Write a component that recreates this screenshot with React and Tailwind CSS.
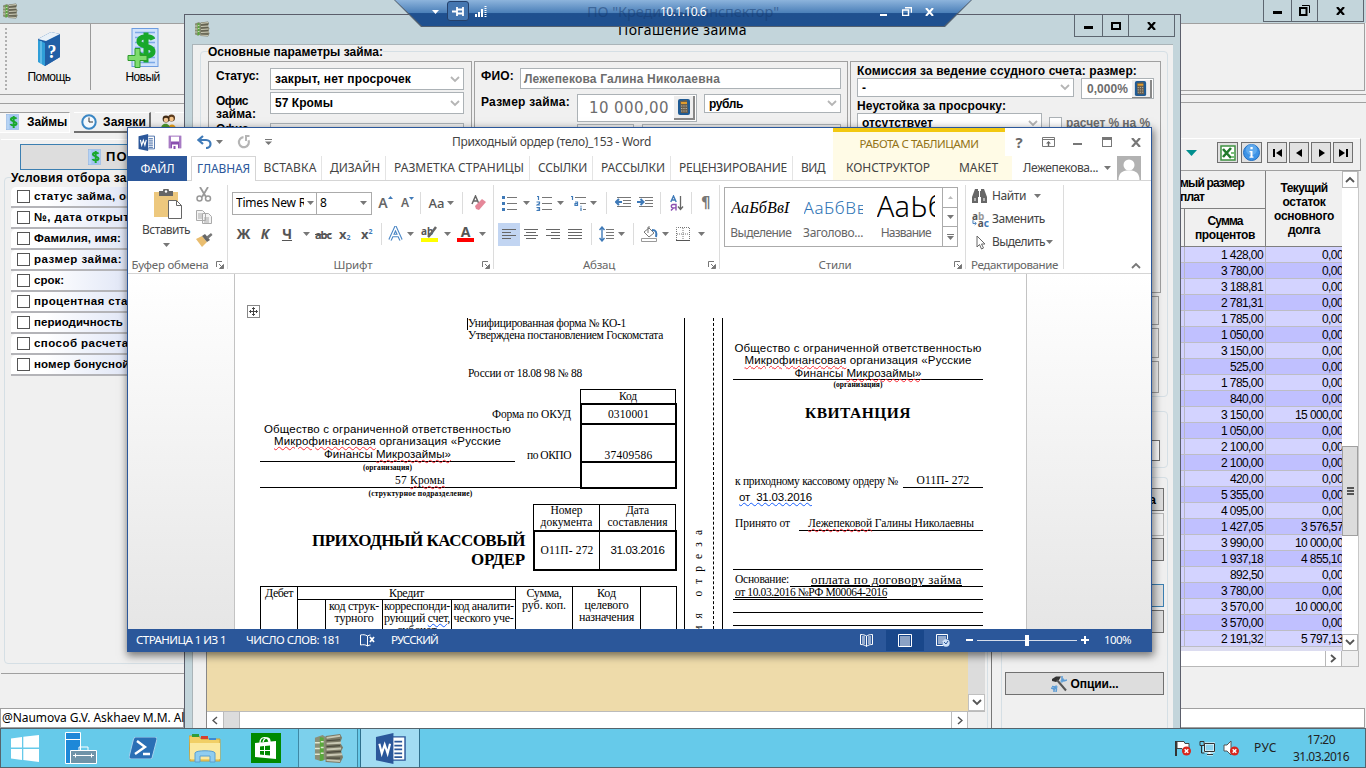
import React, { useLayoutEffect, useRef, useState } from "react";

/* Text run whose tracking is adjusted so that it occupies a fixed width. */
function T({ w, c = "", children }) {
  const ref = useRef(null);
  const [ls, setLs] = useState(0);
  useLayoutEffect(() => {
    const el = ref.current;
    const prev = el.style.letterSpacing;
    el.style.letterSpacing = "0px";
    const natural = el.getBoundingClientRect().width;
    el.style.letterSpacing = prev;
    setLs((w - natural) / el.textContent.length);
  }, [w]);
  return (
    <span ref={ref} className={"inline-block w-max shrink-0 whitespace-pre leading-none " + c} style={{ letterSpacing: w ? ls + "px" : undefined }}>
      {children}
    </span>
  );
}

const Tri = ({ c = "text-[#777]" }) => (
  <svg width="7" height="4" viewBox="0 0 7 4" className={"shrink-0 " + c}><path d="M0 0h7L3.500 4z" fill="currentColor" /></svg>
);
const Chev = ({ d = "M1 1l4 4 4-4", c = "text-[#b5b5b5]" }) => (
  <svg width="10" height="7" viewBox="0 0 10 7" className={"shrink-0 " + c}><path d={d} fill="none" stroke="currentColor" strokeWidth="1.800" /></svg>
);
const Vsep = ({ c = "" }) => <div className={"h-[22px] w-px shrink-0 bg-[#dcdcdc] " + c} />;

/* ---------- icons ---------- */
const Money = ({ s = 16 }) => (
  <svg width={s} height={s} viewBox="0 0 32 32">
    <path d="M2 5l8-3 4 3v22l-6 2-6-2z" fill="#8a8f78" /><path d="M7 4l4 1v23l-4 1z" fill="#5aa83c" />
    <path d="M13 3l15-2 2 4-2 5 3 5-2 4 2 6-3 6-15-1z" fill="#7b7a66" />
    <path d="M14 5l14-2M14 11l15-1M14 17l15-1M14 23l16-1M14 28l14 1" stroke="#c9c8b4" strokeWidth="2" />
    <path d="M14 8l14-1M14 14l14-1M14 20l15-1M14 26l14 0" stroke="#4b4a3d" strokeWidth="1.2" /><path d="M2 10h5M2 16h5M2 22h5M8 9h3M8 15h3M8 21h3" stroke="#dfe6cf" strokeWidth="1.5" />
  </svg>
);
const Sheet = ({ w = 14, h = 16, plus }) => (
  <svg width={w} height={h} viewBox="0 0 32 40">
    {plus ? <rect x="5" y="1" width="26" height="38" fill="#cfe2fb" stroke="#6d9ce0" /> : <rect x="0.5" y="0.5" width="31" height="39" fill="#b5d3f5" stroke="#7fa8dd" />}
    <path d="M8 5h20M8 10h20M8 15h20M8 20h20M8 25h20M8 30h20M8 35h20" stroke="#7ba9e6" strokeWidth="1.6" />
    <path d="M26 12c-2-4-14-4-14 2 0 5 14 4 14 10 0 6-13 6-15 1M19 5v30" fill="none" stroke="#19a82c" strokeWidth="5" />
    {plus && <path d="M8 21h5v7h7v5h-7v7H8v-7H1v-5h7z" fill="#7fdc6e" stroke="#2c9a2a" />}
  </svg>
);
const Book = () => (
  <svg width="24" height="36" viewBox="0 0 24 36">
    <path d="M1 8L14 1l9 2v23L8 35l-7-5z" fill="#1d5fa8" /><path d="M1 8L14 1l9 2-14 7z" fill="#e9f1f8" />
    <path d="M1 9l7 3v23l-7-4z" fill="#2f9ed8" /><path d="M8 12l15-8v22L8 35z" fill="#215fa6" /><path d="M4 10v23" stroke="#8fd6f4" />
    <text x="10.5" y="27" fontSize="18" fontWeight="bold" fill="#fff" fontFamily="Liberation Serif, serif">?</text>
  </svg>
);
const WordIcon = ({ w = 17, h = 17 }) => (
  <svg width={w} height={h} viewBox="0 0 32 32">
    <path d="M17 4h14v24H17z" fill="#fff" stroke="#2b579a" strokeWidth="1.5" /><path d="M20 9h8M20 13h8M20 17h8M20 21h8M20 25h8" stroke="#2b579a" strokeWidth="1.8" />
    <path d="M1 4l18-4v32L1 28z" fill="#2b579a" /><path d="M4.5 11l2.5 10 3-9 3 9 2.5-10" fill="none" stroke="#fff" strokeWidth="2.2" />
  </svg>
);
const Calc = ({ w = 12, h = 16 }) => (
  <svg width={w} height={h} viewBox="0 0 12 16"><rect width="12" height="16" rx="2" fill="#1f5b94" /><path d="M2 2l7-1 1 13H3z" fill="#6b5f4c" /><path d="M3 3h6v2H3z" fill="#e09c2c" /><path d="M3 7h6M3 9.5h6M3 12h6" stroke="#b9b2a0" strokeDasharray="1.3 1" /></svg>
);
const Clock = () => (
  <svg width="16" height="16" viewBox="0 0 16 16"><circle cx="8" cy="8" r="6.7" fill="#f4f9fd" stroke="#3a86c4" strokeWidth="2" /><path d="M8 3.5V8h4" fill="none" stroke="#333" /></svg>
);
const People = () => (
  <svg width="15" height="15" viewBox="0 0 15 15"><circle cx="10.5" cy="4" r="3.5" fill="#5a3a1c" /><circle cx="10.5" cy="5" r="2.3" fill="#f5c58a" /><path d="M7 15c0-6 8-6 8 0z" fill="#e9a11d" /><circle cx="5" cy="5" r="3.4" fill="#402a15" /><circle cx="5" cy="6" r="2.3" fill="#f3c795" /><path d="M0 15c0-7 9-7 9 0z" fill="#4f9a2d" /></svg>
);
const Lines = ({ w = 15, rows }) => (
  <svg width={w} height="12" viewBox="0 0 15 12" className="shrink-0"><path d={rows} stroke="#666" strokeWidth="1" fill="none" /></svg>
);
const Launcher = () => (
  <svg width="8" height="8" viewBox="0 0 8 8" className="shrink-0"><path d="M.5 6V.5H6" fill="none" stroke="#777" /><path d="M3 3l3 3M7.5 3.5v4h-4z" stroke="#777" fill="#777" /></svg>
);

/* ---------- application main window ---------- */
const app = "font-['Liberation_Sans',sans-serif]";
const SEARCH = [["статус займа, офис", 117], ["№, дата открытия", 110], ["Фамилия, имя:", 87], ["размер займа:", 88], ["срок:", 30], ["процентная ставка", 114], ["периодичность", 89], ["способ расчета %", 109], ["номер бонусной карты", 134]];
const ROWS = [["1 428,00", "0,00"], ["3 780,00", "0,00"], ["3 188,81", "0,00"], ["2 781,31", "0,00"], ["1 785,00", "0,00"], ["1 050,00", "0,00"], ["3 150,00", "0,00"], ["525,00", "0,00"], ["1 785,00", "0,00"], ["840,00", "0,00"], ["3 150,00", "15 000,00"], ["1 050,00", "0,00"], ["2 100,00", "0,00"], ["2 100,00", "0,00"], ["420,00", "0,00"], ["5 355,00", "0,00"], ["4 095,00", "0,00"], ["1 427,05", "3 576,57"], ["3 990,00", "10 000,00"], ["1 937,18", "4 855,10"], ["892,50", "0,00"], ["3 780,00", "0,00"], ["3 570,00", "10 000,00"], ["3 570,00", "0,00"], ["2 191,32", "5 797,13"]];
const numWidth = (s) => ({ 4: 21, 6: 33, 8: 42, 9: 48 })[s.length];

const WinButtons = ({ restore }) => (
  <div className="flex h-[22px] w-[101px] border border-t-0 border-[#5d6670] text-black">
    <div className="flex w-[28px] items-center justify-center border-r border-[#5d6670]"><div className="mt-[4px] h-[3px] w-[9px] bg-black" /></div>
    <div className="flex w-[26px] items-center justify-center border-r border-[#5d6670]">
      {restore ? <svg width="11" height="11" viewBox="0 0 11 11"><path d="M3 .5h7.5V8" fill="none" stroke="#000" /><rect x="1" y="3" width="6.5" height="7" fill="none" stroke="#000" strokeWidth="2" /></svg>
        : <svg width="10" height="8" viewBox="0 0 10 8"><rect x="1" y="1" width="8" height="6" fill="none" stroke="#000" strokeWidth="2" /></svg>}
    </div>
    <div className="flex flex-1 items-center justify-center"><svg width="9" height="8" viewBox="0 0 9 8"><path d="M1 0l7 8M8 0L1 8" stroke="#000" strokeWidth="2.2" /></svg></div>
  </div>
);
const NavBtn = ({ d }) => (
  <div className="flex h-[21px] w-[20px] items-center justify-center border border-[#707070] bg-[#e1e1e1]"><svg width="11" height="8" viewBox="0 0 11 8"><path d={d} fill="#000" /></svg></div>
);

function MainLeft() {
  return (
    <div className="flex w-[184px] flex-col overflow-hidden">
      <div className="flex h-[72px] border-b border-t border-[#a0a0a0] pl-[5px]">
        <div className="mt-[4px] h-[62px] w-[3px] shrink-0 border-l-2 border-dotted border-[#b0b0b0]" />
        <div className="mb-[4px] flex w-[83px] shrink-0 flex-col items-center border-r border-[#9a9a9a] pt-[7px]"><Book /><T w={43} c="mt-[4px] text-[12px]">Помощь</T></div>
        <div className="flex w-[103px] shrink-0 flex-col items-center pt-[3px]"><Sheet w={32} h={41} plus /><T w={34} c="mt-[3px] text-[12px]">Новый</T></div>
      </div>
      <div className="h-[9px] border-b border-[#a0a0a0]" />
      <div className="mt-[8px] flex h-[21px] w-[250px] shrink-0 text-[12px] font-bold">
        <div className="flex w-[70px] items-center border border-l-0 border-[#a0a0a0] border-b-white border-r-white bg-[#f7f7f7] pl-[6px]"><Sheet w={13} h={16} /><T w={40} c="ml-[8px]">Займы</T></div>
        <div className="ml-[4px] flex w-[77px] items-center border-b-2 border-r-2 border-t border-[#707070] border-t-white pl-[7px]"><Clock /><T w={43} c="ml-[6px]">Заявки</T></div>
        <div className="ml-[4px] flex w-[90px] items-center border-b-2 border-t border-[#707070] border-t-white pl-[6px]"><People /><T w={52} c="ml-[8px]">Клиенты</T></div>
      </div>
      <div className="ml-px mt-[6px] flex h-[536px] w-[240px] flex-col border-b border-t border-[#a0a0a0] border-t-white">
        <div className="ml-[19px] mt-[4px] flex h-[26px] shrink-0 items-center border border-[#3c7fb1] bg-[#dddddd] pl-[67px]"><Sheet w={13} h={16} /><T w={52} c="ml-[5px] text-[13px] font-bold">ПОИСК</T></div>
        <div className="ml-[3px] mt-[7px] flex h-[487px] flex-col rounded-l border border-[#d5dfe5] bg-[#f0f0f0]">
          <T w={152} c="-mt-[6px] ml-[6px] h-[15px] self-start bg-[#f0f0f0] text-[12px] font-bold">Условия отбора займов:</T>
          {SEARCH.map(([s, w]) => (
            <div key={s} className="ml-[6px] flex h-[21px] shrink-0 items-center rounded-tl-[5px] border-b-2 border-[#b4b4b8] bg-linear-to-r from-white from-15% to-[#d9e0f4] to-60% pl-[6px]">
              <div className="size-[13px] border border-[#555] bg-white" /><T w={w} c="ml-[4px] text-[11.5px] font-bold">{s}</T>
            </div>
          ))}
        </div>
      </div>
      <div className="mt-[34px] flex h-[20px] shrink-0 items-center border border-[#a0a0a0] bg-white pl-px"><T w={221} c="font-['Noto_Sans',sans-serif] text-[12px]">@Naumova G.V. Askhaev M.M. All rights</T></div>
    </div>
  );
}

function MainRight() {
  return (
    <div className="ml-[996px] flex w-[186px] flex-col">
      <div className="h-[68px] w-[185px] border-b border-r border-t border-[#a0a0a0]" />
      <div className="h-[4px] border-b border-[#a0a0a0]" /><div className="h-[9px] border-b border-[#a0a0a0]" />
      <div className="mt-[35px] flex h-[33px] w-[181px] items-center border-b border-r border-[#a0a0a0] border-t border-t-white pb-[4px] pl-[6px]">
        <svg width="11" height="6" viewBox="0 0 11 6"><path d="M0 0h11L5.500 6z" fill="#008f8f" /></svg>
        <div className="ml-[20px] flex size-[21px] items-center justify-center border border-[#707070] bg-[#e1e1e1]"><svg width="16" height="16" viewBox="0 0 16 16"><rect x="1" y="1" width="14" height="14" fill="#fff" stroke="#3e9140" strokeWidth="1.5" /><path d="M3 4l8 9M11 3l-8 9" stroke="#217b2c" strokeWidth="2.6" /><path d="M11 7h3v2h-3zM11 11h3v2h-3z" fill="#7cc07c" /></svg></div>
        <div className="ml-[3px] flex size-[21px] items-center justify-center border border-[#707070] bg-[#e1e1e1]"><svg width="17" height="17" viewBox="0 0 17 17"><circle cx="8.500" cy="8.500" r="8" fill="#3d93e6" stroke="#1f6dc0" /><circle cx="8.500" cy="5.500" r="5.500" fill="#77b9f3" opacity=".6" /><path d="M7.400 3h2.300v2.300H7.400zM6.500 7h3v5.500h1v1.300h-4v-1.300h1V8.300h-1z" fill="#fff" /></svg></div>
        <div className="ml-[5px] flex gap-[2px]">
          <NavBtn d="M1 0h2v8H1zM10 0v8L4 4z" /><NavBtn d="M8 0v8L2 4z" /><NavBtn d="M3 0v8l6-4z" /><NavBtn d="M8 0h2v8H8zM1 0v8l6-4z" />
        </div>
      </div>
      <div className="flex h-[480px] w-[179px] border-r border-[#c8c8c8]">
        <div className="flex w-[162px] flex-col overflow-hidden text-[12px]">
          <div className="flex h-[76px] shrink-0 border-b border-[#808080] text-center font-bold">
            <div className="flex w-[86px] flex-col border-r border-[#808080]">
              <div className="flex h-[38px] flex-col gap-[2px] border-b border-[#808080] pt-[6px] text-left"><T w={64}>мый размер</T><T w={24}>плат</T></div>
              <div className="flex flex-1"><div className="w-[5px] border-r border-[#808080]" /><div className="flex flex-1 flex-col items-center gap-[2px] pt-[6px]"><T w={35}>Сумма</T><T w={60}>процентов</T></div></div>
            </div>
            <div className="flex flex-1 flex-col items-center gap-[2px] pt-[11px]"><T w={47}>Текущий</T><T w={43}>остаток</T><T w={60}>основного</T><T w={32}>долга</T></div>
          </div>
          {ROWS.map(([a, b], i) => (
            <div key={i} className={"flex h-[16px] shrink-0 items-center border-b border-[#bdbdc4] " + (i % 2 ? "bg-[#c0c0ff]" : "bg-[#d3d3ff]")}>
              <div className="h-full w-[5px] border-r border-[#b8b8c4]" />
              <div className="flex h-full w-[81px] items-center justify-end border-r border-[#b8b8c4] pr-[2px]"><T w={numWidth(a)}>{a}</T></div>
              <div className="flex flex-1 justify-end"><T w={numWidth(b)} c="-mr-[1px]">{b}</T></div>
            </div>
          ))}
          <div className="h-[4px] bg-[#dcdcf0]" />
        </div>
        <div className="flex flex-1 flex-col bg-white">
          <div className="flex h-[17px] items-center justify-center border border-[#b8b8b8]"><Chev d="M1 6l4-4 4 4" c="text-[#555]" /></div>
          <div className="mt-[258px] flex h-[90px] flex-col items-center justify-center gap-px border border-[#a0a0a0] bg-[#dcdcdc]"><div className="h-[2px] w-[7px] bg-[#555]" /><div className="h-[2px] w-[7px] bg-[#555]" /><div className="h-[2px] w-[7px] bg-[#555]" /></div>
          <div className="mt-auto flex h-[17px] items-center justify-center border border-[#b8b8b8]"><Chev c="text-[#555]" /></div>
        </div>
      </div>
      <div className="flex h-[16px] w-[179px] border-b border-r border-[#b8b8b8]"><div className="w-[145px] bg-white" /><div className="flex w-[17px] items-center justify-center border-x border-[#b8b8b8] bg-white text-[#555]"><svg width="7" height="9" viewBox="0 0 7 9"><path d="M1 1l4 3.500-4 3.500" fill="none" stroke="currentColor" strokeWidth="1.8" /></svg></div></div>
      <div className="mt-[41px] h-[20px] w-[185px] border border-l-0 border-[#a0a0a0] bg-white" />
    </div>
  );
}

function MainWindow() {
  return (
    <div className={"absolute inset-0 flex flex-col bg-[#c3d5db] " + app}>
      <div className="flex h-[23px] items-start justify-between pl-[2px] pr-[2px]"><div className="mt-[3px]"><Money /></div><WinButtons restore /></div>
      <div className="flex h-[705px] bg-[#f0f0f0]"><MainLeft /><MainRight /></div>
    </div>
  );
}

/* ---------- loan window ---------- */
const Combo = ({ c, children }) => (
  <div className={"flex shrink-0 items-center justify-between border border-[#acb2b6] bg-white pl-[4px] pr-[3px] " + c}>{children}<Chev /></div>
);
const B = "text-[12px] font-bold";

function LoanWindow() {
  return (
    <div className={"absolute left-[184px] top-[14px] flex h-[714px] w-[997px] flex-col border border-b-0 border-[#5b5e6b] bg-[#c3d5db] " + app}>
      <div className="flex h-[29px] items-start pl-[9px]">
        <div className="mt-[6px]"><Money /></div>
        <T w={129} c="ml-[408px] mt-[8px] font-['Noto_Sans',sans-serif] text-[14px]">Погашение займа</T>
        <div className="ml-[327px]"><WinButtons /></div>
      </div>
      <div className="mx-[7px] flex flex-1 flex-col overflow-hidden border-l border-t border-[#aab4b8] bg-[#f0f0f0] px-[7px] pt-[6px]">
        <div className="flex h-[346px] w-[968px] shrink-0 flex-col rounded border border-[#d5dfe5]">
          <T w={175} c={"-mt-[6px] ml-[7px] h-[15px] self-start bg-[#f0f0f0] " + B}>Основные параметры займа:</T>
          <div className="ml-[7px] flex h-[232px] shrink-0 gap-[2px]">
            <div className="flex w-[264px] flex-col border border-[#a0a0a0] px-[7px] pt-[6px]">
              <div className="flex h-[24px] justify-between"><T w={43} c={"mt-[2px] " + B}>Статус:</T><Combo c="h-[22px] w-[194px]"><T w={136} c={B}>закрыт, нет просрочек</T></Combo></div>
              <div className="flex h-[23px] justify-between"><div className="flex flex-col gap-[1px] pt-[3px]"><T w={32} c={B}>Офис</T><T w={40} c={B}>займа:</T></div><Combo c="h-[22px] w-[194px]"><T w={58} c={B}>57 Кромы</T></Combo></div>
              <div className="mt-[8px] flex justify-between"><T w={32} c={B}>Офис</T><div className="h-[22px] w-[194px] border border-[#acb2b6]" /></div>
            </div>
            <div className="flex w-[374px] flex-col border border-[#a0a0a0] px-[6px] pt-[6px]">
              <div className="flex h-[21px] items-start"><T w={33} c={"mt-[2px] " + B}>ФИО:</T><div className="ml-[6px] flex h-[21px] w-[322px] items-center border border-[#acb2b6] bg-white pl-[3px]"><T w={196} c={"text-[#6d6d6d] " + B}>Лежепекова Галина Николаевна</T></div></div>
              <div className="mt-[5px] flex"><T w={89} c={"mt-[2px] " + B}>Размер займа:</T>
                <div className="ml-[7px] flex h-[28px] w-[121px] items-center justify-end border border-[#acb2b6] bg-white pr-px"><T w={80} c="mr-[5px] font-['DejaVu_Sans',sans-serif] text-[15px] text-[#6d6d6d]">10 000,00</T><div className="flex h-[24px] w-[21px] items-center justify-center border-b-2 border-r-2 border-[#888] bg-[#eee]"><Calc /></div></div>
                <Combo c="ml-[7px] h-[19px] w-[137px]"><T w={34} c={B}>рубль</T></Combo></div>
              <div className="mt-[2px] flex gap-[8px] pl-[96px]"><div className="h-[20px] w-[57px] border border-[#acb2b6]" /><div className="h-[20px] flex-1 border border-[#acb2b6]" /></div>
            </div>
            <div className="flex w-[311px] flex-col border border-[#a0a0a0] px-[6px] pt-[3px]">
              <T w={280} c={B}>Комиссия за ведение ссудного счета: размер:</T>
              <div className="mt-px flex h-[21px] gap-[7px]"><Combo c="h-[19px] w-[217px]"><T c={B}>-</T></Combo><div className="flex h-[21px] w-[73px] items-center justify-end border border-[#acb2b6] bg-white pr-px"><T w={41} c="mr-[4px] text-[12px] font-bold text-[#6d6d6d]">0,000%</T><div className="flex h-[18px] w-[20px] shrink-0 items-center border-b border-r-2 border-[#888] bg-[#eee] pl-[2px]"><Calc w={13} h={15} /></div></div></div>
              <T w={149} c={"mt-[1px] " + B}>Неустойка за просрочку:</T>
              <div className="mt-px flex items-center"><Combo c="h-[20px] w-[185px]"><T w={71} c={B}>отсутствует</T></Combo><div className="ml-[7px] size-[13px] shrink-0 border border-[#acb2b6] bg-white" /><T w={84} c={"ml-[4px] text-[#6d6d6d] " + B}>расчет % на %</T></div>
            </div>
          </div>
          <div className="mr-[8px] mt-[3px] flex flex-col gap-[3px]"><div className="h-[29px] border border-[#a0a0a0]" /><div className="h-[30px] border border-[#a0a0a0]" /><div className="h-[32px] border border-[#a0a0a0]" /></div>
        </div>
        <div className="mt-[14px] flex h-[57px] w-[968px] shrink-0 items-end justify-end rounded border border-[#d5dfe5] pb-[6px] pr-[7px]"><div className="h-[21px] w-[200px] border border-[#707070] bg-white" /></div>
        <div className="flex flex-1">
          <div className="ml-[6px] flex w-[779px] shrink-0 flex-col border-l border-[#888]">
            <div className="flex h-[243px]"><div className="flex-1 bg-[#eedbaa]" /><div className="flex w-[17px] flex-col justify-end bg-[#dcdcdc]"><div className="flex h-[17px] items-center justify-center border border-[#c0c0c0] bg-white"><Chev c="text-[#555]" /></div></div></div>
            <div className="flex h-[17px] border-t border-[#bbb]">
              <div className="flex w-[16px] items-center justify-center bg-white"><svg width="6" height="9" viewBox="0 0 6 9"><path d="M5 1L1 4.500 5 8" fill="none" stroke="#555" strokeWidth="1.5" /></svg></div>
              <div className="w-[17px] border-x border-[#bbb] bg-[#dcdcdc]" /><div className="w-[711px] bg-white" /><div className="flex w-[17px] items-center justify-center border-x border-[#bbb] bg-white"><svg width="6" height="9" viewBox="0 0 6 9"><path d="M1 1l4 3.500L1 8" fill="none" stroke="#555" strokeWidth="1.5" /></svg></div>
            </div>
          </div>
          <div className="ml-[2px] w-[5px] shrink-0 border-l border-r border-[#777] border-l-[#d5dfe5]" />
          <div className="ml-[9px] mt-[9px] flex w-[167px] shrink-0 flex-col rounded-t border border-b-0 border-[#d5dfe5] px-[3px] pt-[10px] text-[12px] font-bold">
            <div className="flex h-[23px] items-center justify-end border border-[#707070] bg-[#ddd] pr-[7px]">Оплата</div>
            <div className="mt-[2px] h-[23px] border border-[#b5b5b5] bg-[#f0f0f0]" />
            <div className="mt-[2px] h-[23px] border border-[#707070] bg-[#ddd]" />
            <div className="mt-[23px] h-[23px] border border-[#3c7fb1] bg-[#ddd]" />
            <div className="mt-[3px] h-[23px] border border-[#707070] bg-[#ddd]" />
            <div className="mt-[39px] flex h-[23px] items-center justify-center gap-[4px] border border-[#707070] bg-[#dddddd]">
              <svg width="16" height="16" viewBox="0 0 16 16"><path d="M2.500 13.500l3.500-3.500M10 6l3-3" stroke="#6ba6d8" strokeWidth="2.500" /><path d="M11 0v3.500l2 1.500 3-1M0 12l3 1v3M1 10.500L4 11l1.500 2L5 16" fill="none" stroke="#5b9bd5" strokeWidth="1.500" /><path d="M1 3l4-2.500h5L8 4 5 6 1 5z" fill="#333" /><path d="M6 4l9 10.500" stroke="#555" strokeWidth="2" /></svg>
              <T w={48}>Опции...</T>
            </div>
          </div>
        </div>
      </div>
    </div>
  );
}

/* ---------- Word ---------- */
const ui = "font-['Noto_Sans','Open_Sans',sans-serif]";
const TABS = [["ВСТАВКА", 53, "w-[66px]"], ["ДИЗАЙН", 50, "w-[64px]"], ["РАЗМЕТКА СТРАНИЦЫ", 130, "w-[144px]"], ["ССЫЛКИ", 49, "w-[63px]"], ["РАССЫЛКИ", 64, "w-[78px]"], ["РЕЦЕНЗИРОВАНИЕ", 108, "w-[122px]"], ["ВИД", 24, "w-[40px]"]];

function WordTop() {
  return (
    <>
      <div className="flex h-[28px] shrink-0 items-center pl-[10px]">
        <WordIcon />
        <svg className="ml-[13px]" width="14" height="14" viewBox="0 0 14 14"><path d="M.7.7h12.600v12.600H.7z" fill="#8a4fb0" /><path d="M3 1.500h8v5H3z" fill="#fff" /><path d="M4 9.500h6V14H4z" fill="#fff" /><path d="M5.500 11h2v3h-2z" fill="#8a4fb0" /><path d="M1.500 1h1v12h-1zM11.500 1h1v12h-1z" fill="#fff" opacity=".5" /></svg>
        <svg className="ml-[15px]" width="15" height="14" viewBox="0 0 15 14"><path d="M6 1L1.500 5 6 9M2 5h7c6 0 6 8 0 8" fill="none" stroke="#3f7ab8" strokeWidth="2.200" /></svg>
        <div className="ml-[4px]"><Tri /></div>
        <svg className="ml-[14px]" width="14" height="14" viewBox="0 0 14 14"><path d="M6.500 2.200a5 5 0 1 0 5 3" fill="none" stroke="#b5b5b5" strokeWidth="2.200" /><path d="M8 1h4.500M9 .5v5.500" fill="none" stroke="#b5b5b5" strokeWidth="2" /></svg>
        <svg className="ml-[14px]" width="7" height="6" viewBox="0 0 7 6"><path d="M0 .5h7" stroke="#777" /><path d="M0 2.500h7L3.500 6z" fill="#777" /></svg>
        <T w={199} c="ml-[180px] text-[12px] text-[#444]">Приходный ордер (тело)_153 - Word</T>
        <div className="ml-[182px] flex h-[28px] w-[172px] items-center justify-center border-t-4 border-[#f2c811] bg-[#fffbe6]"><T w={119} c="text-[11.500px] text-[#937318]">РАБОТА С ТАБЛИЦАМИ</T></div>
        <div className="flex w-[28px] justify-center"><span className="text-[15px] font-bold leading-none text-[#6a6a6a]">?</span></div>
        <div className="flex w-[30px] justify-center"><svg width="13" height="10" viewBox="0 0 13 10"><path d="M.5.5h12v9H.5zM.5 2.500h12" fill="none" stroke="#777" /><path d="M6.500 4L4 6.500h1.800V9h1.400V6.500H9z" fill="#666" /></svg></div>
        <div className="flex w-[29px] justify-center"><div className="mt-[4px] h-[2px] w-[9px] bg-[#777]" /></div>
        <div className="flex w-[29px] justify-center"><div className="h-[10px] w-[10px] border border-t-[3px] border-[#777]" /></div>
        <div className="flex w-[29px] justify-center"><svg width="10" height="9" viewBox="0 0 10 9"><path d="M1 0l8 9M9 0L1 9" stroke="#777" strokeWidth="2.200" /></svg></div>
      </div>
      <div className="flex h-[25px] shrink-0 items-stretch text-[12px] text-[#444]">
        <div className="flex w-[59px] items-center justify-center bg-[#2b579a] text-white"><T w={34}>ФАЙЛ</T></div>
        <div className="w-[4px] border-b border-[#d5d5d5]" />
        <div className="flex w-[65px] items-center justify-center border border-b-0 border-[#d5d5d5] text-[#2b579a]"><T w={53}>ГЛАВНАЯ</T></div>
        <div className="flex border-b border-[#d5d5d5]">
          {TABS.map(([s, w, c], i) => (
            <div key={s} className={"flex items-center justify-center " + c + (i < 6 ? " border-r border-[#e4e4e4] pl-[3px]" : "")}><T w={w}>{s}</T></div>
          ))}
          <div className="flex w-[179px] items-center bg-[#fffbe6]"><T w={84} c="ml-[13px]">КОНСТРУКТОР</T><T w={39} c="ml-[29px]">МАКЕТ</T></div>
          <div className="flex w-[139px] items-center pl-[11px]"><T w={75}>Лежепекова...</T><div className="ml-[6px]"><Tri /></div>
            <svg className="ml-[6px] shrink-0 bg-[#b2b2b2]" width="24" height="24" viewBox="0 0 24 24"><circle cx="12" cy="9" r="5.500" fill="#fff" /><path d="M1.500 24c0-7 4-9 8-9.500h5c4 .5 8 2.500 8 9.500z" fill="#fff" /></svg></div>
        </div>
      </div>
    </>
  );
}

const Grp = ({ c, label, w, launch, children }) => (
  <div className={"flex h-[84px] shrink-0 flex-col border-r border-[#dcdcdc] " + c}>
    <div className="flex h-[74px] shrink-0 flex-col">{children}</div>
    <div className="flex h-[12px] shrink-0 items-center">
      <div className={"flex flex-1 justify-center " + (launch ? "pr-[4px]" : "")}><T w={w} c="text-[11.500px] text-[#666]">{label}</T></div>
      {launch && <div className="mr-[3px]"><Launcher /></div>}
    </div>
  </div>
);
const List = ({ kind }) => (
  <svg width="16" height="16" viewBox="0 0 16 16" className="shrink-0">
    {kind === "dot" && <path d="M1 1h3v3H1zM1 7h3v3H1zM1 13h3v3H1z" fill="#3f7ab8" />}
    {kind === "num" && <path d="M1 1.500h1.500V5M.5 7h3v1.500L1 10h3M.5 12.500h3v3h-3M1.500 14h2" fill="none" stroke="#3f7ab8" strokeWidth="1.200" />}
    {kind === "multi" && <path d="M1 1.500h1.500V5M5 7h2.500v3.500H5V8.700h2.500M11 12.500v3.500M11 10.700v1" fill="none" stroke="#3f7ab8" strokeWidth="1.200" />}
    <path d={kind === "multi" ? "M5 2.500h11M10 8.500h6M13 14.500h3" : "M6 2.500h10M6 8.500h10M6 14.500h10"} stroke="#777" />
  </svg>
);
const Indent = ({ d }) => (
  <svg width="16" height="12" viewBox="0 0 16 12" className="shrink-0"><path d="M2 .5h14M8 3.500h8M8 6.500h8M2 9.500h14" stroke="#777" /><path d={d} fill="none" stroke="#3f7ab8" strokeWidth="2" /></svg>
);

function Ribbon() {
  return (
    <div className="flex h-[93px] shrink-0 border-b border-[#d5d5d5] pt-[4px] text-[12px] text-[#444]">
      <Grp c="w-[100px]" label="Буфер обмена" w={77} launch>
        <div className="flex">
          <div className="flex w-[62px] flex-col items-end pt-[4px]">
            <svg className="mr-[8px]" width="28" height="30" viewBox="0 0 28 30"><path d="M0 3h24v25H0z" fill="#edc87e" /><path d="M5 2h4a3 3 0 0 1 6 0h4v5H5z" fill="#666" /><circle cx="12" cy="2.500" r="1.200" fill="#fff" /><path d="M14.500 11.500h8l5 5v13h-13z" fill="#fff" stroke="#666" /><path d="M22.500 11.500v5h5" fill="none" stroke="#666" /></svg>
            <T w={48} c="mt-[5px]">Вставить</T>
            <div className="mr-[20px] mt-[7px]"><Tri /></div>
          </div>
          <div className="flex flex-1 flex-col items-start gap-[8px] pl-[6px] pt-[2px]">
            <svg width="16" height="15" viewBox="0 0 16 15"><path d="M4 0l6 10M12 0L6 10" stroke="#999" strokeWidth="1.800" /><circle cx="3.500" cy="11.500" r="2.500" fill="none" stroke="#999" strokeWidth="1.500" /><circle cx="12" cy="11.500" r="2.500" fill="none" stroke="#999" strokeWidth="1.500" /></svg>
            <svg width="16" height="14" viewBox="0 0 16 14"><path d="M.5.5h6l3 3v7h-9zM6.500 3.500h6l3 3v7h-9z" fill="#f4f4f4" stroke="#aaa" /><path d="M2 4h4M2 6h4M2 8h4M8 8h5M8 10h5M8 12h5" stroke="#aaa" /></svg>
            <svg width="17" height="15" viewBox="0 0 17 15"><path d="M0 7l6-3 5 6-5 5z" fill="#e9bd6f" /><path d="M6 4l3-2 5 6-3 2z" fill="#666" /><path d="M10 5l5-4 1.500 2-4.500 4z" fill="#777" /></svg>
          </div>
        </div>
      </Grp>
      <Grp c="w-[266px]" label="Шрифт" w={39} launch>
        <div className="mt-[6px] flex h-[24px] items-center pl-[4px]">
          <div className="flex h-[23px] w-[85px] items-center border border-[#ababab] pl-[3px] text-black"><div className="w-[68px] overflow-hidden"><T w={70}>Times New R</T></div><div className="ml-[3px]"><Tri /></div></div>
          <div className="-ml-px flex h-[23px] w-[56px] items-center justify-between border border-[#ababab] pl-[3px] pr-[4px] text-black"><span className="leading-none">8</span><Tri /></div>
          <div className="flex w-[27px] items-start justify-center"><span className="text-[14px] font-semibold leading-none text-[#666]">A</span><svg width="5" height="3" viewBox="0 0 5 3"><path d="M0 3h5L2.500 0z" fill="#3f7ab8" /></svg></div>
          <div className="flex w-[21px] items-start pl-[2px]"><span className="text-[12px] font-semibold leading-none text-[#666]">A</span><svg width="5" height="3" viewBox="0 0 5 3"><path d="M0 0h5L2.500 3z" fill="#3f7ab8" /></svg></div>
          <Vsep />
          <div className="flex w-[41px] items-center justify-center gap-[3px]"><span className="text-[13px] font-medium leading-none text-[#555]">Aa</span><Tri /></div>
          <Vsep />
          <div className="flex flex-1 pl-[8px]"><svg width="16" height="16" viewBox="0 0 16 16"><path d="M1 9l3.500-8L8 9M2.500 6h4" fill="none" stroke="#666" strokeWidth="1.500" /><path d="M4 11l7-7 4 3-7 8-3-1z" fill="#e58799" /></svg></div>
        </div>
        <div className="mt-[7px] flex h-[24px] items-center font-bold text-[#555]">
          <span className="w-[31px] text-center text-[14px] leading-none">Ж</span>
          <span className="w-[12px] text-center font-['Open_Sans',sans-serif] text-[14px] italic leading-none">К</span>
          <span className="w-[32px] text-center text-[14px] leading-none underline">Ч</span>
          <Tri />
          <T w={16} c="ml-[5px] text-[11px] line-through">abc</T>
          <span className="ml-[8px] flex w-[15px] items-end text-[13px] leading-none">x<span className="text-[7px] leading-none text-[#3f7ab8]">2</span></span>
          <span className="ml-[7px] flex w-[15px] items-start text-[13px] leading-none">x<span className="text-[7px] leading-none text-[#3f7ab8]">2</span></span>
          <Vsep c="ml-[5px]" />
          <svg className="ml-[6px]" width="15" height="16" viewBox="0 0 15 16"><path d="M2 14l5.500-12L13 14M4 9.500h7" fill="none" stroke="#4a86c5" strokeWidth="3.600" /><path d="M2 14l5.500-12L13 14M4 9.500h7" fill="none" stroke="#fff" strokeWidth="1.400" /></svg>
          <div className="ml-[4px]"><Tri /></div>
          <div className="ml-[7px] flex w-[17px] flex-col"><div className="flex h-[12px] items-start"><span className="text-[10px] leading-none">ab</span><svg className="-ml-[6px] shrink-0" width="10" height="12" viewBox="0 0 10 12"><path d="M9 1L3 9l-2 2" stroke="#666" strokeWidth="2.500" /></svg></div><div className="h-[4px] bg-[#ff0]" /></div>
          <div className="ml-[6px]"><Tri /></div>
          <div className="ml-[6px] flex w-[17px] flex-col items-center"><span className="h-[12px] text-[14px] leading-[12px]">A</span><div className="h-[4px] w-full bg-[#f00]" /></div>
          <div className="ml-[5px]"><Tri /></div>
        </div>
      </Grp>
      <Grp c="w-[226px]" label="Абзац" w={32} launch>
        <div className="mt-[6px] flex h-[24px] items-center pl-[7px]">
          <List kind="dot" /><div className="ml-[6px]"><Tri /></div>
          <div className="ml-[6px]"><List kind="num" /></div><div className="ml-[5px]"><Tri /></div>
          <div className="ml-[6px]"><List kind="multi" /></div><div className="ml-[4px]"><Tri /></div>
          <Vsep c="ml-[9px]" />
          <div className="ml-[8px] flex gap-[6px]"><Indent d="M7 5H1M4 2L1 5l3 3" /><Indent d="M0 5h6M3.500 2l3 3-3 3" /></div>
          <Vsep c="ml-[7px]" />
          <svg className="ml-[9px]" width="14" height="16" viewBox="0 0 14 16"><path d="M.8 7L3.500 1l2.700 6M1.600 5h4" fill="none" stroke="#3f7ab8" strokeWidth="1.400" /><path d="M6 15.500V9.500H3a1.600 1.600 0 0 0 0 3.400h3M3.400 13L1 15.500" fill="none" stroke="#8a4fb0" strokeWidth="1.400" /><path d="M10.500 1v13M8 11.500l2.500 3 2.500-3" fill="none" stroke="#666" strokeWidth="1.300" /></svg>
          <Vsep c="ml-[7px]" />
          <span className="ml-[9px] font-['DejaVu_Sans',sans-serif] text-[15px] font-bold leading-none text-[#777]">¶</span>
        </div>
        <div className="mt-[7px] flex h-[24px] items-center pl-[4px]">
          <div className="flex h-[23px] w-[22px] items-center justify-center bg-[#c2d5f2]"><Lines rows="M0 1.500h14M0 4.500h9M0 7.500h14M0 10.500h9" /></div>
          <div className="ml-[4px] flex gap-[7px]"><Lines rows="M0 1.500h14M2 4.500h10M0 7.500h14M2 10.500h10" /><Lines rows="M0 1.500h14M5 4.500h9M0 7.500h14M5 10.500h9" /><Lines rows="M0 1.500h14M0 4.500h14M0 7.500h14M0 10.500h14" /></div>
          <Vsep c="ml-[8px]" />
          <svg className="ml-[7px]" width="15" height="16" viewBox="0 0 15 16"><path d="M3 1v14M.5 4L3 1l2.500 3M.5 12L3 15l2.500-3" fill="none" stroke="#3f7ab8" strokeWidth="1.400" /><path d="M7 3.500h8M7 6.500h8M7 9.500h8M7 12.500h8" stroke="#777" /></svg>
          <div className="ml-[4px]"><Tri /></div><Vsep c="ml-[8px]" />
          <svg className="ml-[7px]" width="17" height="16" viewBox="0 0 17 16"><path d="M3 6l5-4 5 5-5 4z" fill="#fff" stroke="#777" /><path d="M7 7V1h2" stroke="#777" fill="none" /><path d="M11 4c4 0 5 2 4 7" stroke="#3f7ab8" strokeWidth="2" fill="none" /><path d="M.5 12.500h15v3H.5z" fill="#fff" stroke="#999" /></svg>
          <div className="ml-[4px]"><Tri /></div>
          <svg className="ml-[7px]" width="14" height="14" viewBox="0 0 14 14"><path d="M.5 13V.5h13V13M7 1v12M1 7h12" fill="none" stroke="#777" strokeDasharray="1 1" /><path d="M0 13.500h14" stroke="#555" /></svg>
          <div className="ml-[8px]"><Tri /></div>
        </div>
      </Grp>
      <Grp c="w-[246px]" label="Стили" w={33} launch>
        <div className="ml-[4px] mt-[2px] flex h-[60px] w-[234px] shrink-0 border border-[#ababab]">
          <div className="flex w-[72px] flex-col items-center"><div className="flex h-[39px] w-[59px] items-center overflow-hidden text-black"><T w={62} c="font-['Liberation_Serif',serif] text-[16px] italic">АаБбВвГ</T></div><T w={61} c="text-[#666]">Выделение</T></div>
          <div className="flex w-[73px] flex-col items-center"><div className="flex h-[39px] w-[59px] items-center overflow-hidden text-[#2e74b5]"><T w={63} c="text-[17px] font-light">АаБбВв</T></div><T w={60} c="text-[#666]">Заголово...</T></div>
          <div className="flex w-[73px] flex-col items-center"><div className="flex h-[39px] w-[58px] items-center overflow-hidden text-black"><T w={68} c="h-[34px] text-[29px] font-light leading-[29px]">АаЬб</T></div><T w={50} c="text-[#666]">Название</T></div>
          <div className="flex w-[15px] flex-col border-l border-[#ababab]">
            <div className="flex h-[20px] items-center justify-center border-b border-[#ababab]"><svg width="5" height="3" viewBox="0 0 5 3"><path d="M0 3h5L2.500 0z" fill="#bbb" /></svg></div>
            <div className="flex h-[19px] items-center justify-center border-b border-[#ababab]"><Tri /></div>
            <div className="flex flex-1 flex-col items-center justify-center gap-px"><div className="h-px w-[7px] bg-[#777]" /><Tri /></div>
          </div>
        </div>
      </Grp>
      <Grp c="w-[98px]" label="Редактирование" w={87}>
        <div className="flex h-[21px] items-center pl-[6px]"><svg width="15" height="14" viewBox="0 0 15 14"><path d="M3 0h3v2h3V0h3l3 8v6H9V8H6v6H0V8z" fill="#666" /><path d="M7.500 2v6M3 9v3M12 9v3" stroke="#fff" /></svg><T w={34} c="ml-[5px]">Найти</T><div className="ml-[8px]"><Tri /></div></div>
        <div className="mt-[2px] flex h-[22px] items-center pl-[6px]">
          <div className="flex w-[17px] flex-col text-[10px] font-bold leading-[8px] text-[#555]">
            <div className="h-[7px]">a<span className="text-[#999]">b</span></div>
            <div className="flex h-[8px] items-center justify-end"><svg className="mr-px" width="5" height="6" viewBox="0 0 5 6"><path d="M1 0v3.500h3M2.800 2L4.500 3.500 2.800 5" fill="none" stroke="#3f7ab8" /></svg>a<span className="text-[#3f7ab8]">c</span></div>
          </div>
          <T w={53} c="ml-[3px]">Заменить</T></div>
        <div className="mt-px flex h-[22px] items-center pl-[10px]"><svg width="10" height="15" viewBox="0 0 10 15"><path d="M1 1v11l2.500-2.500L5.500 14l2-1-2-4H9z" fill="#fff" stroke="#666" /></svg><T w={53} c="ml-[6px]">Выделить</T><div className="ml-px"><Tri /></div></div>
      </Grp>
      <div className="flex flex-1 items-end justify-end pb-[4px] pr-[10px]"><Chev d="M1 6l4-4 4 4" c="text-[#777]" /></div>
    </div>
  );
}

const serif = "font-['Liberation_Serif',serif]";
const sans = "font-['Liberation_Sans',sans-serif]";
const wavy = "underline decoration-red-500 decoration-wavy decoration-1 underline-offset-1";
const wavyB = "underline decoration-blue-600 decoration-wavy decoration-1 underline-offset-1";

const Org = () => (
  <>
    <div className="flex h-[12px] items-center justify-center"><T w={247} c={sans}>Общество с ограниченной ответственностью</T></div>
    <div className="flex h-[12px] items-center justify-center"><T w={227} c={sans}><span className={wavy}>Микрофинансовая</span> организация «Русские</T></div>
    <div className="flex h-[13px] items-center justify-center"><T w={127} c={sans}>Финансы <span className={wavy}>Микрозаймы»</span></T></div>
  </>
);

function FormSide() {
  return (
    <div className="flex w-[417px] shrink-0 flex-col">
      <div className="flex h-[12px] shrink-0 items-center pl-[207px]"><div className="h-[12px] w-px bg-black" /><T w={158}>Унифицированная форма № КО-1</T></div>
      <div className="flex h-[12px] shrink-0 items-center pl-[208px]"><T w={195}>Утверждена постановлением Госкомстата</T></div>
      <div className="mt-[26px] flex h-[12px] shrink-0 items-center pl-[208px]"><T w={114}>России от 18.08 98 № 88</T></div>
      <div className="mt-[9px] flex h-[100px] shrink-0">
        <div className="flex w-[320px] flex-col">
          <div className="flex h-[35px] shrink-0 items-center justify-end pr-[9px] pt-[17px]"><T w={79}>Форма по ОКУД</T></div>
          <div className="flex h-[38px] shrink-0"><div className="w-[255px] border-b border-black">
            <Org /></div><div className="flex flex-1 items-end justify-end pb-[1px] pr-[9px]"><T w={44}>по ОКПО</T></div></div>
          <div className="flex h-[12px] w-[255px] shrink-0 items-center justify-center"><T w={49} c="text-[7.500px] font-bold">(организация)</T></div>
          <div className="flex h-[14px] shrink-0 items-center justify-center border-b border-black"><T w={50}>57 <span className={wavy}>Кромы</span></T></div>
        </div>
        <div className="flex w-[97px] flex-col">
          <div className="flex h-[14px] w-[96px] shrink-0 items-center justify-center border border-b-0 border-black"><T w={18}>Код</T></div>
          <div className="flex h-[22px] shrink-0 items-center justify-center border-2 border-black pt-px"><T w={41}>0310001</T></div>
          <div className="flex h-[38px] shrink-0 items-end justify-center border-x-2 border-b-2 border-black"><T w={48}>37409586</T></div>
          <div className="h-[26px] shrink-0 border-2 border-t-0 border-black" />
        </div>
      </div>
      <div className="flex h-[9px] w-[321px] shrink-0 items-center justify-center"><T w={104} c="text-[7.500px] font-bold">(структурное подразделение)</T></div>
      <div className="mt-[6px] flex h-[67px] shrink-0">
        <div className="flex w-[265px] flex-col items-end gap-[2px] pt-[28px] text-[17px] font-bold"><T w={213}>ПРИХОДНЫЙ КАССОВЫЙ</T><T w={54}>ОРДЕР</T></div>
        <div className="ml-[8px] flex w-[144px] flex-col">
          <div className="mr-px flex h-[26px] shrink-0 border border-b-0 border-black">
            <div className="flex w-[66px] flex-col items-center border-r border-black"><T w={32} c="h-[12px]">Номер</T><T w={52}>документа</T></div>
            <div className="flex flex-1 flex-col items-center"><T w={23} c="h-[12px]">Дата</T><T w={60}>составления</T></div>
          </div>
          <div className="flex h-[41px] shrink-0 items-center border-2 border-black"><div className="flex h-full w-[65px] items-center justify-center border-r border-black"><T w={53}>О11П- 272</T></div><div className="flex flex-1 justify-center"><T w={54} c={sans}>31.03.2016</T></div></div>
        </div>
      </div>
      <div className="mt-[15px] flex h-[60px] shrink-0 border border-black text-[12px]">
        <div className="flex w-[37px] justify-center border-r border-black"><T w={28}>Дебет</T></div>
        <div className="flex w-[218px] flex-col border-r border-black">
          <div className="flex h-[13px] items-center justify-center border-b border-black"><T w={35}>Кредит</T></div>
          <div className="flex flex-1">
            <div className="w-[28px] border-r border-black" />
            <div className="flex w-[57px] flex-col items-center border-r border-black"><T w={50}>код струк-</T><T w={39}>турного</T></div>
            <div className="flex w-[69px] flex-col items-center border-r border-black"><T w={66}>корреспонди-</T><T w={66}>рующий <span className={wavyB}>счет,</span></T><T w={40}>субсчет</T></div>
            <div className="flex flex-1 flex-col items-center"><T w={60}>код аналити-</T><T w={60}>ческого уче-</T></div>
          </div>
        </div>
        <div className="flex w-[57px] flex-col items-center border-r border-black"><T w={35}>Сумма,</T><T w={44}>руб. коп.</T></div>
        <div className="flex w-[68px] flex-col items-center border-r border-black"><T w={19}>Код</T><T w={44}>целевого</T><T w={55}>назначения</T></div>
        <div className="flex-1" />
      </div>
    </div>
  );
}

function Receipt() {
  return (
    <div className="ml-[10px] flex w-[250px] shrink-0 flex-col pt-[25px]">
      <div className="h-[37px] border-b border-black"><Org /></div>
      <div className="flex h-[9px] items-center justify-center"><T w={49} c="text-[7.500px] font-bold">(организация)</T></div>
      <div className="mt-[14px] flex h-[19px] items-center justify-center"><T w={106} c="text-[15.500px] font-bold">КВИТАНЦИЯ</T></div>
      <div className="mt-[53px] flex h-[13px]"><div className="flex w-[170px] items-center pl-[2px]"><T w={163}>к приходному кассовому ордеру №</T></div><div className="flex flex-1 items-center justify-center border-b border-black"><T w={53}>О11П- 272</T></div></div>
      <div className="mt-[3px] flex h-[13px] items-center pl-[6px]"><T w={73} c={sans + " " + wavyB}>от  31.03.2016</T></div>
      <div className="mt-[13px] flex h-[14px]"><div className="flex w-[66px] items-center pl-[2px]"><T w={55}>Принято от</T></div><div className="flex flex-1 items-center justify-center border-b border-black"><T w={166}><span className={wavy}>Лежепековой</span> Галины Николаевны</T></div></div>
      <div className="h-[39px] border-b border-black" />
      <div className="mt-[3px] flex h-[14px]"><div className="flex w-[57px] items-center pl-[2px]"><T w={54}>Основание:</T></div><div className="flex flex-1 items-center justify-center border-b border-black"><T w={151} c="text-[13px] underline">оплата по договору займа</T></div></div>
      <div className="flex h-[13px] items-center border-b border-black pl-[2px]"><T w={152} c="underline">от 10.03.2016 №РФ М00064-2016</T></div>
      <div className="h-[13px] border-b border-black" /><div className="h-[13px] border-b border-black" />
    </div>
  );
}

function Doc() {
  return (
    <div className="flex h-[355px] shrink-0 overflow-hidden bg-linear-to-b from-white to-[#e6e6e6]">
      <div className={"ml-[106px] flex w-[793px] shrink-0 flex-col overflow-hidden border-x border-[#c3c3c3] bg-white text-[11.500px] text-black " + serif}>
        <div className="h-[44px] shrink-0 pl-[12px] pt-[31px]"><svg width="13" height="13" viewBox="0 0 13 13"><rect x=".5" y=".5" width="12" height="12" fill="#fff" stroke="#888" /><path d="M6.500 2.500v8M2.500 6.500h8M5 4l1.500-1.500L8 4M5 9l1.500 1.500L8 9M4 5L2.500 6.500 4 8M9 5l1.500 1.500L9 8" fill="none" stroke="#444" /></svg></div>
        <div className="flex h-[311px] shrink-0 pl-[25px]">
          <FormSide />
          <div className="ml-[7px] flex h-[311px] w-[39px] shrink-0 items-end border-x border-black">
            <div className="flex h-[311px] w-[29px] items-start justify-center overflow-hidden border-r border-dashed border-black pt-[205px]"><span className="rotate-180 whitespace-pre text-[11.500px] leading-none tracking-[7px] [writing-mode:vertical-rl]">линия отреза</span></div>
          </div>
          <Receipt />
        </div>
      </div>
    </div>
  );
}

function Status() {
  return (
    <div className="flex h-[22px] shrink-0 items-center bg-[#2b579a] pl-[8px] text-[11.500px] text-white">
      <T w={90}>СТРАНИЦА 1 ИЗ 1</T><T w={94} c="ml-[20px]">ЧИСЛО СЛОВ: 181</T>
      <svg className="ml-[20px]" width="15" height="13" viewBox="0 0 15 13"><path d="M7.500 12V2C5 .5 3 .5.500 1v10c2.500-.5 5-.5 7 1 1-.8 2-1 3-1M7.500 2c1-.7 2-1 3-1" fill="none" stroke="#fff" /><path d="M10 3l4 5M14 3l-4 5" stroke="#fff" strokeWidth="1.800" /></svg>
      <T w={47} c="ml-[16px]">РУССКИЙ</T>
      <svg className="ml-[422px]" width="13" height="13" viewBox="0 0 13 13"><path d="M6.500 12.500V2C5 1 3 .5.500.5v10c2.500 0 4.500.5 6 2 1.500-1.500 3.500-2 6-2V.5c-2.500 0-4.500.5-6 1.500M2 3h3M2 5h3M2 7h3M2 9h3M8 3h3M8 5h3M8 7h3M8 9h3" fill="none" stroke="#fff" /></svg>
      <div className="ml-[13px] flex h-[21px] w-[38px] items-center justify-center bg-[#19478a]"><svg width="14" height="13" viewBox="0 0 14 13"><path d="M.5.5h13v12H.5zM2 3h10M2 5h10M2 7h10M2 9h10M2 11h10" fill="none" stroke="#fff" /></svg></div>
      <svg className="ml-[12px]" width="14" height="13" viewBox="0 0 14 13"><path d="M7 11.500H.5V.5h11V5M2 3h8M2 5h8M2 7h5M2 9h4" fill="none" stroke="#fff" /><circle cx="10" cy="9" r="3.700" fill="#cfe0f5" /><path d="M8 8l2 2 2-3" stroke="#2b579a" fill="none" /></svg>
      <div className="ml-[16px] h-[2px] w-[7px] bg-white" />
      <div className="ml-[4px] flex w-[100px] items-center"><div className="h-px w-[48px] bg-white/80" /><div className="h-[11px] w-[4px] bg-white" /><div className="h-px flex-1 bg-white/80" /></div>
      <svg className="ml-[4px]" width="8" height="8" viewBox="0 0 8 8"><path d="M4 0v8M0 4h8" stroke="#fff" strokeWidth="2" /></svg>
      <T w={27} c="ml-[15px]">100%</T>
    </div>
  );
}

function WordWindow() {
  return (
    <div className={"absolute left-[127px] top-[127px] flex h-[525px] w-[1025px] flex-col overflow-hidden border border-[#2b579a] bg-white shadow-[1px_3px_8px_1px_rgba(0,0,0,0.5)] " + ui}>
      <WordTop /><Ribbon /><Doc /><Status />
    </div>
  );
}

/* ---------- remote desktop bar ---------- */
function RemoteBar() {
  return (
    <div className="absolute left-[394px] top-0 h-[27px] w-[578px] bg-[#53606f] [clip-path:polygon(0_0,100%_0,calc(100%-27px)_100%,27px_100%)]">
      <div className="flex h-[26px] w-full items-start bg-linear-to-b from-[#8db4dc] from-0% via-[#4a7fb8] via-50% to-[#1f508f] to-52% [clip-path:polygon(1px_0,calc(100%-1px)_0,calc(100%-28px)_100%,28px_100%)]">
        <div className="ml-[38px] mt-[10px] shrink-0 text-white"><Tri c="text-white" /></div>
        <div className="ml-[8px] mt-px flex h-[20px] w-[22px] shrink-0 items-center justify-center rounded-[3px] border border-[#24406a] bg-[#4476b0]"><svg width="13" height="9" viewBox="0 0 13 9"><path d="M0 4.500h5M5 0v9M5 2.500h6M5 6.500h6M11 0v9" stroke="#fff" strokeWidth="1.800" /></svg></div>
        <svg className="ml-[6px] mt-[5px] shrink-0" width="12" height="12" viewBox="0 0 12 12"><path d="M1 12V9M4 12V7M7 12V4" stroke="#fff" strokeWidth="2" /><path d="M10.500 12V0" stroke="#fff" strokeWidth="2" strokeDasharray="1 1" /></svg>
        <div className="relative ml-[100px] mt-[4px] flex h-[20px] w-[192px] shrink-0">
          <T w={192} c="font-['Noto_Sans',sans-serif] text-[14.500px] text-[#15396d]/50">ПО "Кредитный инспектор"</T>
          <div className="absolute inset-x-0 top-[2px] flex justify-center"><T w={46} c="font-['Noto_Sans',sans-serif] text-[12px] text-white">10.1.10.6</T></div>
        </div>
        <div className="ml-[101px] mt-[14px] h-[2px] w-[7px] shrink-0 bg-white" />
        <svg className="ml-[15px] mt-[7px] shrink-0" width="10" height="9" viewBox="0 0 10 9"><path d="M3 .8h6.500v5" fill="none" stroke="#fff" strokeWidth="1.500" /><path d="M.5 3h6v5.500h-6z" fill="none" stroke="#fff" strokeWidth="1.500" /></svg>
        <svg className="ml-[13px] mt-[8px] shrink-0" width="9" height="8" viewBox="0 0 9 8"><path d="M1 0l7 8M8 0L1 8" stroke="#fff" strokeWidth="2" /></svg>
      </div>
    </div>
  );
}

/* ---------- taskbar ---------- */
const RedX = () => <g><circle cx="11.500" cy="11" r="4.500" fill="#d8261c" /><path d="M9.700 9.200l3.600 3.600M13.300 9.200l-3.600 3.600" stroke="#fff" strokeWidth="1.500" /></g>;
function Taskbar() {
  return (
    <div className={"absolute bottom-0 left-0 flex h-[40px] w-[1366px] items-center border border-[#56646c] bg-[#66caea] pl-[10px] " + ui}>
      <svg width="28" height="27" viewBox="0 0 28 27"><path d="M0 3.500l11-1.500v10.500H0zM12.300 1.800L28 0v12.500H12.300zM0 14h11v11L0 23.500zM12.300 14H28v13l-15.700-2z" fill="#fff" /></svg>
      <svg className="ml-[26px]" width="32" height="32" viewBox="0 0 32 32"><path d="M.5.500h15v31H.5z" fill="#1e88d8" stroke="#fff" /><path d="M.5 7.500h15" stroke="#fff" /><path d="M5.500 18.500h26v13h-26z" fill="#6f93a8" stroke="#fff" /><path d="M14 18v-3h9v3M8 23.500h21M10.500 21.500v4M26.500 21.500v4" fill="none" stroke="#fff" /></svg>
      <svg className="ml-[32px]" width="28" height="22" viewBox="0 0 28 22"><path d="M6 0h20a2 2 0 0 1 2 2l-5 19a2 2 0 0 1-2 1H2a2 2 0 0 1-2-2L4.500 2z" fill="#2a6fb5" stroke="#a7d2ee" /><path d="M8 4l8 6-10 7M14 17h7" fill="none" stroke="#fff" strokeWidth="2.400" /></svg>
      <svg className="ml-[32px]" width="32" height="30" viewBox="0 0 32 30"><path d="M0 3h10l2 3h19v22H1z" fill="#f1cf66" stroke="#c9a23c" /><path d="M3 1h7v3H3z" fill="#2f9d3a" /><path d="M12 3h7v3h-7z" fill="#d4402e" /><path d="M20 5h7v2h-7z" fill="#3c8ad4" /><path d="M1 10h30v16H1z" fill="#fbe9a0" /><path d="M6 29V20c0-3 20-3 20 0v9h-5v-6H11v6z" fill="#8fcdf0" stroke="#5b9fd0" /></svg>
      <svg className="ml-[30px]" width="30" height="30" viewBox="0 0 30 30"><path d="M0 0h30v30H0z" fill="#008a00" /><path d="M4 10l21-2v18L4 24z" fill="#fff" /><path d="M9 10c0-7 8-7 9-1M12 9c2-6 7-5 7 0" fill="none" stroke="#fff" strokeWidth="1.300" /><path d="M9 13.500l4-.5v4H9zM14 13l5-.5V17h-5zM9 18h4v4l-4-.5zM14 18h5v4.500l-5-.5z" fill="#008a00" /></svg>
      <div className="ml-[17px] flex h-[38px] w-[60px] items-center justify-center border-x border-[#3f88a4] bg-[#7cd0ec]"><Money s={31} /></div>
      <div className="ml-[2px] flex h-[38px] w-[60px] items-center justify-center border-x border-[#2f6f8c] bg-[#a2dcf2]"><WordIcon w={31} h={31} /></div>
      <div className="ml-[755px] flex shrink-0 items-center gap-[8px]">
        <svg width="16" height="16" viewBox="0 0 16 16"><path d="M1 1v15" stroke="#333" strokeWidth="2" /><path d="M2 1.500h7l1 2h4v7H8l-1-2H2z" fill="#fff" stroke="#444" /><RedX /></svg>
        <svg width="16" height="16" viewBox="0 0 16 16"><path d="M5.500 3.500h10v8h-10zM8 14.500h6M10.500 12v2" fill="#8cd5ef" stroke="#fff" strokeWidth="2" /><path d="M5.500 3.500h10v8h-10zM8 14.500h6M2.500 6v7h3M1 1.500h4v4H1z" fill="none" stroke="#333" /></svg>
        <svg width="17" height="16" viewBox="0 0 17 16"><path d="M1 5h3l4-4v14l-4-4H1z" fill="#fff" stroke="#555" /><RedX /></svg>
      </div>
      <T w={23} c="ml-[14px] text-[12px] text-[#222]">РУС</T>
      <div className="ml-[16px] flex w-[56px] shrink-0 flex-col items-center gap-[5px] text-[12px] text-[#222]"><T w={28}>17:20</T><T w={56}>31.03.2016</T></div>
    </div>
  );
}

export default function App() {
  return (
    <div className="relative h-[768px] w-[1366px] overflow-hidden bg-[#c3d5db] text-black">
      <MainWindow /><LoanWindow /><WordWindow /><RemoteBar /><Taskbar />
    </div>
  );
}
